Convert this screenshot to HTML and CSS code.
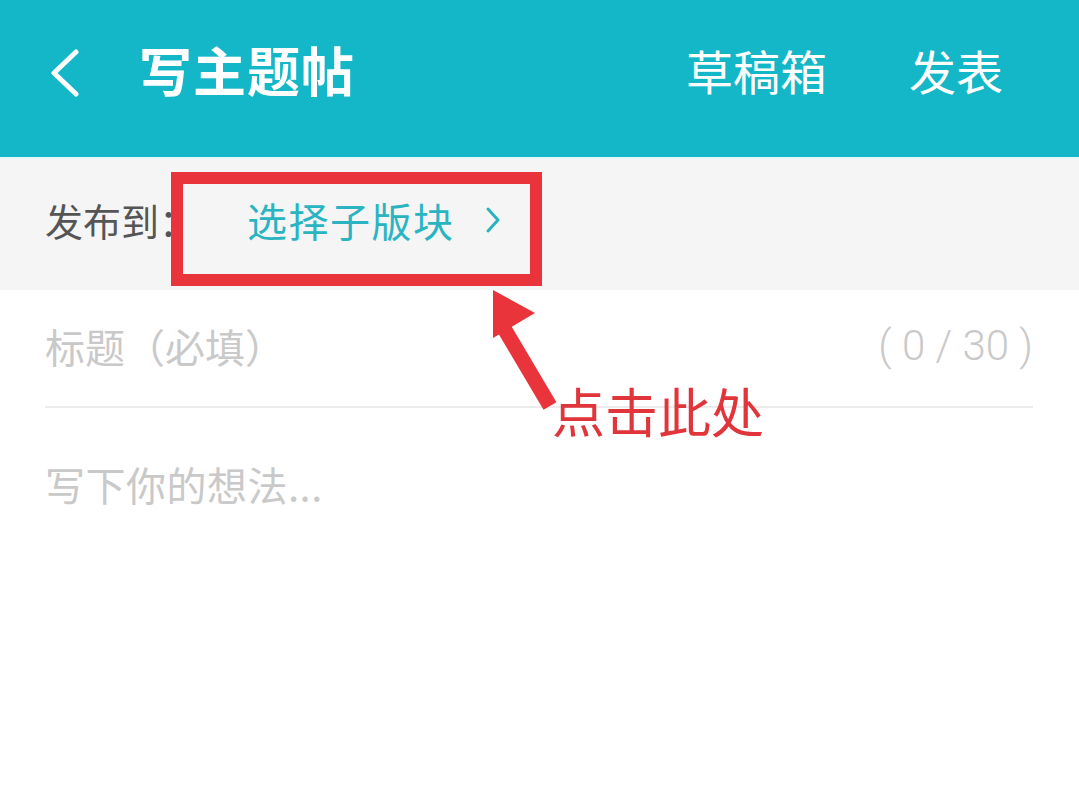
FILE: index.html
```html
<!DOCTYPE html>
<html lang="zh">
<head>
<meta charset="utf-8">
<link rel="stylesheet" href="styles.css">
</head>
<body>
<div class="page">
  <header class="topbar">
    <div class="left">
      <svg class="back" width="34" height="48" viewBox="0 0 34 48"><polyline points="28,3 6,24 28,45" fill="none" stroke="#fff" stroke-width="5" stroke-linecap="round" stroke-linejoin="round"/></svg>
      <h1 class="title">写主题帖</h1>
    </div>
    <div class="actions">
      <span class="act">草稿箱</span>
      <span class="act">发表</span>
    </div>
  </header>
  <div class="target">
    <span class="label">发布到：</span>
    <span class="picker">选择子版块
      <svg class="chev" width="16" height="28" viewBox="0 0 16 28"><polyline points="3,3 13,14 3,25" fill="none" stroke="#2ab4c2" stroke-width="3" stroke-linecap="round" stroke-linejoin="round"/></svg>
    </span>
  </div>
  <div class="form">
    <div class="title-row">
      <span class="ph">标题（必填）</span>
      <span class="count">( 0 / 30 )</span>
    </div>
    <div class="body-row">写下你的想法...</div>
  </div>
  <div class="box"></div>
  <svg class="arrow" width="90" height="130" viewBox="0 0 90 130">
    <line x1="70" y1="116" x2="25" y2="40" stroke="#e8343a" stroke-width="15"/>
    <polygon points="13,0 55,23 13,48" fill="#e8343a"/>
  </svg>
  <div class="note">点击此处</div>
</div>
</body>
</html>
```
FILE: styles.css
```css
* { box-sizing: border-box; margin: 0; padding: 0; }
html, body { width: 1079px; height: 785px; overflow: hidden; background: #fff; }
body { font-family: "Noto Sans CJK SC", "Noto Sans", sans-serif; }
.page { position: relative; width: 1079px; height: 785px; background: #fff; }
.topbar {
  height: 157px;
  background: #14b7c7;
  display: flex;
  align-items: center;
  justify-content: space-between;
  padding: 0 76px 18px 48px;
  color: #fff;
}
.left { display: flex; align-items: center; }
.back { display: block; margin-right: 57px; margin-top: 6px; }
.title { font-size: 53px; font-weight: 700; line-height: 1; letter-spacing: 1px; }
.actions { display: flex; align-items: center; gap: 82px; }
.act { font-size: 47px; line-height: 1; }
.target {
  height: 133px;
  background: #f5f5f5;
  border-top: 2px solid #e6f7f8;
  display: flex;
  align-items: center;
  padding: 0 0 10px 45px;
}
.label { font-size: 38px; color: #555; line-height: 1; width: 202px; }
.picker { font-size: 40px; color: #2ab4c2; line-height: 1; display: flex; align-items: center; gap: 30px; letter-spacing: 1.5px; }
.chev { display: block; }
.form { padding: 0 46px 0 45px; }
.title-row {
  height: 118px;
  border-bottom: 2px solid #ebebeb;
  display: flex;
  align-items: center;
  justify-content: space-between;
  padding-bottom: 4px;
  color: #c9c9c9;
}
.ph { font-size: 40px; line-height: 1; }
.count { font-family: "Roboto", "Liberation Sans", sans-serif; font-size: 42px; font-weight: 300; line-height: 1; color: #c9c9c9; }
.body-row { font-size: 40px; line-height: 1; color: #c9c9c9; padding-top: 56px; letter-spacing: 0.5px; }
.box {
  position: absolute;
  left: 171px; top: 172px;
  width: 371px; height: 114px;
  border: 12px solid #e8343a;
}
.arrow { position: absolute; left: 480px; top: 290px; }
.note {
  position: absolute;
  left: 552px; top: 384px;
  font-size: 53px; line-height: 1;
  color: #e0353b;
}
```
